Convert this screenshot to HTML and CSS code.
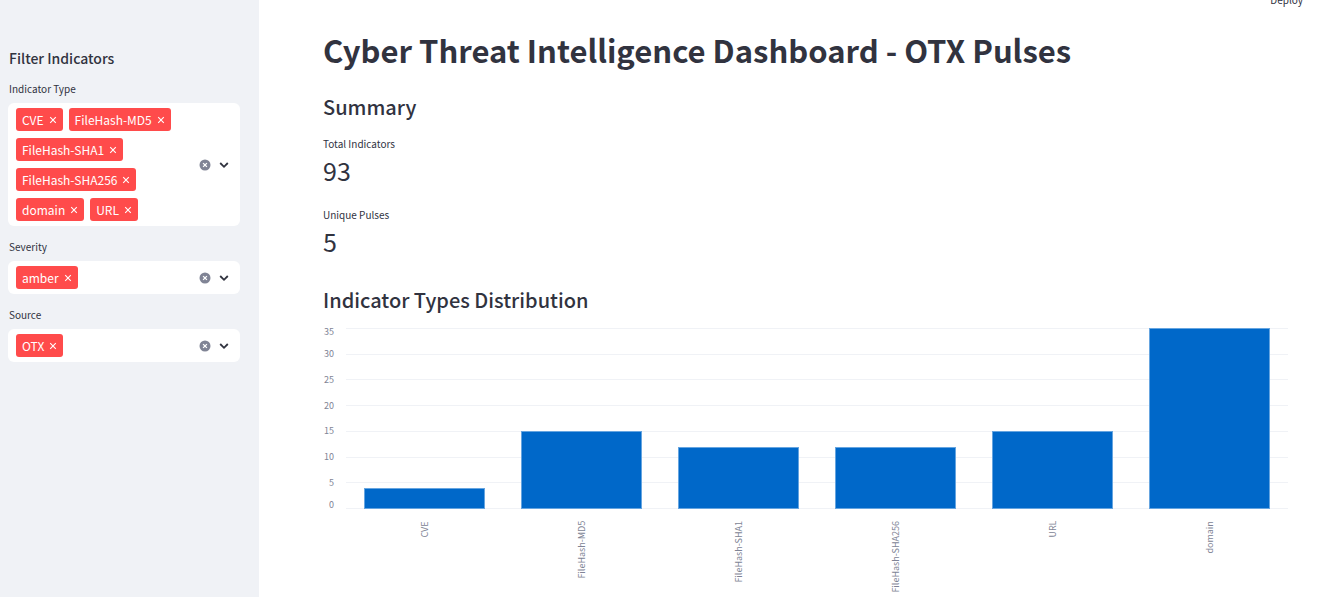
FILE: index.html
```
<!DOCTYPE html>
<html lang="en">
<head>
<meta charset="utf-8">
<meta name="viewport" content="width=device-width, initial-scale=1">
<title>Cyber Threat Intelligence Dashboard</title>
<link rel="stylesheet" href="styles.css">
</head>
<body>
<svg class="defs" aria-hidden="true">
  <symbol id="cross" viewBox="0 0 8 8"><path d="M1.2 1.2 6.8 6.8M6.8 1.2 1.2 6.8" stroke="currentColor" stroke-width="1.1" fill="none"/></symbol>
  <symbol id="clear" viewBox="0 0 12 12"><circle cx="6" cy="6" r="5.5" fill="currentColor"/><path d="M4.1 4.1 7.9 7.9M7.9 4.1 4.1 7.9" stroke="#fff" stroke-width="1.3" fill="none"/></symbol>
  <symbol id="chevron" viewBox="0 0 12 12"><path d="M2.2 4 6 7.8 9.8 4" stroke="currentColor" stroke-width="1.8" fill="none"/></symbol>
</svg>
<div class="app">
  <aside class="sidebar">
    <h2 class="sidebar-title">Filter Indicators</h2>

    <div class="field">
      <label class="field-label" for="type">Indicator Type</label>
      <div class="multiselect">
        <div class="tags">
          <span class="tag">CVE<button class="tag-remove" type="button" aria-label="Remove CVE"><svg><use href="#cross"/></svg></button></span>
          <span class="tag">FileHash-MD5<button class="tag-remove" type="button" aria-label="Remove FileHash-MD5"><svg><use href="#cross"/></svg></button></span>
          <span class="tag">FileHash-SHA1<button class="tag-remove" type="button" aria-label="Remove FileHash-SHA1"><svg><use href="#cross"/></svg></button></span>
          <span class="tag">FileHash-SHA256<button class="tag-remove" type="button" aria-label="Remove FileHash-SHA256"><svg><use href="#cross"/></svg></button></span>
          <span class="tag">domain<button class="tag-remove" type="button" aria-label="Remove domain"><svg><use href="#cross"/></svg></button></span>
          <span class="tag">URL<button class="tag-remove" type="button" aria-label="Remove URL"><svg><use href="#cross"/></svg></button></span>
          <input class="search" id="type" type="text" autocomplete="off">
        </div>
        <button class="clear" type="button" aria-label="Clear all"><svg><use href="#clear"/></svg></button>
        <button class="open" type="button" aria-label="Open"><svg><use href="#chevron"/></svg></button>
      </div>
    </div>

    <div class="field">
      <label class="field-label" for="severity">Severity</label>
      <div class="multiselect">
        <div class="tags">
          <span class="tag">amber<button class="tag-remove" type="button" aria-label="Remove amber"><svg><use href="#cross"/></svg></button></span>
          <input class="search" id="severity" type="text" autocomplete="off">
        </div>
        <button class="clear" type="button" aria-label="Clear all"><svg><use href="#clear"/></svg></button>
        <button class="open" type="button" aria-label="Open"><svg><use href="#chevron"/></svg></button>
      </div>
    </div>

    <div class="field">
      <label class="field-label" for="source">Source</label>
      <div class="multiselect">
        <div class="tags">
          <span class="tag">OTX<button class="tag-remove" type="button" aria-label="Remove OTX"><svg><use href="#cross"/></svg></button></span>
          <input class="search" id="source" type="text" autocomplete="off">
        </div>
        <button class="clear" type="button" aria-label="Clear all"><svg><use href="#clear"/></svg></button>
        <button class="open" type="button" aria-label="Open"><svg><use href="#chevron"/></svg></button>
      </div>
    </div>
  </aside>

  <div class="page">
    <header class="toolbar"><button class="deploy" type="button">Deploy</button></header>
    <main class="content">
      <h1 class="title">Cyber Threat Intelligence Dashboard - OTX Pulses</h1>

      <h2 class="heading">Summary</h2>
      <dl class="metrics">
        <div class="metric"><dt class="metric-label">Total Indicators</dt><dd class="metric-value">93</dd></div>
        <div class="metric"><dt class="metric-label">Unique Pulses</dt><dd class="metric-value">5</dd></div>
      </dl>

      <h2 class="heading">Indicator Types Distribution</h2>
      <div class="chart">
        <div class="y-axis">
          <span>35</span><span>30</span><span>25</span><span>20</span><span>15</span><span>10</span><span>5</span><span>0</span>
        </div>
        <div class="plot">
          <div class="gridlines"><i></i><i></i><i></i><i></i><i></i><i></i><i></i></div>
          <div class="bars">
            <div class="slot"><div class="bar" style="height:11.43%"></div></div>
            <div class="slot"><div class="bar" style="height:42.86%"></div></div>
            <div class="slot"><div class="bar" style="height:34.29%"></div></div>
            <div class="slot"><div class="bar" style="height:34.29%"></div></div>
            <div class="slot"><div class="bar" style="height:42.86%"></div></div>
            <div class="slot"><div class="bar" style="height:100%"></div></div>
          </div>
        </div>
        <div class="x-axis">
          <span>CVE</span><span>FileHash-MD5</span><span>FileHash-SHA1</span><span>FileHash-SHA256</span><span>URL</span><span>domain</span>
        </div>
      </div>
    </main>
  </div>
</div>
</body>
</html>
```

FILE: styles.css
```
* { box-sizing: border-box; }

body {
  margin: 0;
  background: #fff;
  color: #31333f;
  font-family: "Noto Sans CJK SC", "Noto Sans", sans-serif;
  font-size: 12px;
}

h1, h2, dl, dd { margin: 0; }

button {
  padding: 0;
  border: 0;
  background: none;
  color: inherit;
  font: inherit;
  cursor: pointer;
}

svg { display: block; }

.defs { display: none; }

.app {
  display: flex;
  min-height: 100vh;
}

/* Sidebar */
.sidebar {
  flex: 0 0 259px;
  display: flex;
  flex-direction: column;
  gap: 12px;
  padding: 48px 19px 16px 8px;
  background: #f0f2f6;
}

.sidebar-title {
  height: 20px;
  padding-left: 1px;
  font-size: 14px;
  font-weight: 500;
  line-height: 20px;
}

.field {
  display: flex;
  flex-direction: column;
  gap: 5px;
}

.field-label {
  padding-left: 1px;
  font-size: 10px;
  line-height: 18px;
}

.multiselect {
  display: flex;
  align-items: center;
  padding: 5px 10px 5px 8px;
  border-radius: 6px;
  background: #fff;
}

.tags {
  flex: 1;
  display: flex;
  flex-wrap: wrap;
  gap: 7px 6px;
}

.tag {
  display: flex;
  align-items: center;
  gap: 5px;
  height: 23px;
  padding: 0 6px;
  border-radius: 3px;
  background: #ff4b4b;
  color: #fff;
  line-height: 22px;
}

.tag-remove svg { width: 8px; height: 8px; }

.search {
  flex: 1;
  width: 2px;
  min-width: 2px;
  height: 23px;
  padding: 0;
  border: 0;
  outline: 0;
  background: transparent;
  font: inherit;
}

.clear { margin-right: 7px; color: #808495; }
.clear svg { width: 12px; height: 12px; }
.open svg { width: 12px; height: 12px; }

/* Main area */
.page {
  flex: 1;
  min-width: 0;
}

.toolbar {
  display: flex;
  align-items: flex-end;
  justify-content: flex-end;
  height: 9px;
  padding-right: 18px;
  overflow: hidden;
}

.deploy {
  font-size: 10px;
  line-height: 18px;
}

.content { padding: 16px 33px 0 64px; }

.title {
  margin-bottom: 17px;
  font-size: 31px;
  font-weight: 700;
  line-height: 50px;
}

.heading {
  font-size: 20px;
  font-weight: 500;
  line-height: 30px;
}

.metrics {
  display: flex;
  flex-direction: column;
  gap: 17px;
  margin: 13px 0 25px;
}

.metric-label {
  font-size: 10px;
  line-height: 18px;
}

.metric-value {
  font-size: 25px;
  font-weight: 400;
  line-height: 35px;
}

.metric { padding-bottom: 1px; }

/* Bar chart */
.chart {
  display: grid;
  grid-template-columns: 11px 1fr;
  grid-template-rows: 181px auto;
  column-gap: 12px;
  margin-top: 13px;
  color: #808495;
  font-size: 9px;
}

.y-axis {
  display: flex;
  flex-direction: column;
  line-height: 8px;
}

.y-axis span {
  flex: 2 0 0;
  display: flex;
  align-items: center;
  justify-content: flex-end;
}

.y-axis span:first-child { flex: 1 0 0; align-items: flex-start; }
.y-axis span:last-child { flex: 1 0 0; align-items: flex-end; }

.plot { display: grid; }

.gridlines,
.bars {
  grid-area: 1 / 1;
  display: flex;
}

.gridlines {
  flex-direction: column;
  border-bottom: 1px solid #f0f2f6;
}

.gridlines i {
  flex: 1;
  border-top: 1px solid #f0f2f6;
}

.slot {
  flex: 1;
  display: flex;
  align-items: flex-end;
  justify-content: center;
}

.bar {
  width: 77%;
  border: 1px solid #66a5e0;
  background: #0068c9;
}

.x-axis {
  grid-column: 2;
  display: flex;
  padding-top: 12px;
}

.x-axis span {
  flex: 1;
  writing-mode: vertical-rl;
  transform: rotate(180deg);
  display: flex;
  align-items: center;
  justify-content: flex-end;
  line-height: 12px;
}
```
